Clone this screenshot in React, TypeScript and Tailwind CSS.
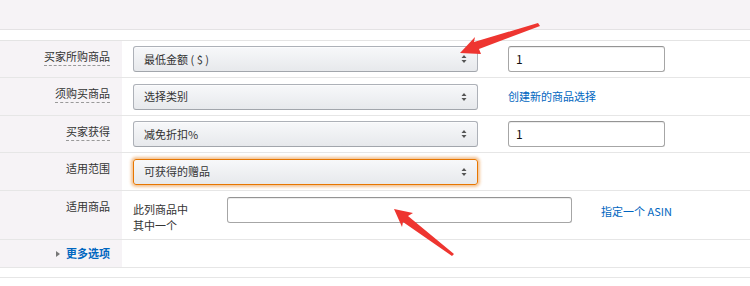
import React from "react"

const font = { fontFamily: '"Noto Sans CJK SC", "Liberation Sans", sans-serif' }

function Arrows() {
  return (
    <svg width="12" height="12" viewBox="0 0 6 10" className="w-[6px] h-[10px]">
      <path d="M3 1 L5.5 4 H0.5 Z M3 9 L5.5 6 H0.5 Z" fill="#555" />
    </svg>
  )
}

function Select({ text, focus = false }: { text: string; focus?: boolean }) {
  return (
    <div
      className={
        focus
          ? "w-[345px] h-[26px] flex items-center justify-between pl-[10px] pr-[10px] rounded-[3px] border border-[#e77600] bg-linear-to-b from-[#f7f8fa] to-[#e7e9ec] shadow-[0_0_3px_2px_rgba(228,121,17,0.45)] text-[#333]"
          : "w-[345px] h-[26px] flex items-center justify-between pl-[10px] pr-[10px] rounded-[3px] border border-[#adb1b8] border-b-[#a2a6ac] bg-linear-to-b from-[#f7f8fa] to-[#e7e9ec] shadow-[0_1px_0_rgba(255,255,255,0.6)_inset] text-[#333]"
      }
    >
      <span>{text}</span>
      <Arrows />
    </div>
  )
}

function TextInput({ value, w }: { value?: string; w: string }) {
  return (
    <div className={`${w} h-[26px] flex items-center px-[7px] rounded-[3px] border border-[#a6a6a6] border-t-[#949494] bg-white shadow-[0_1px_0_rgba(255,255,255,0.5),0_1px_0_rgba(0,0,0,0.07)_inset] text-[#111] text-[12px]`}>
      {value}
    </div>
  )
}

function Label({ text, dotted = false }: { text: string; dotted?: boolean }) {
  return (
    <div className="w-[122px] shrink-0 bg-[#f6f3f6] text-right pr-[12px] pt-[7px] leading-[16px] text-[#333]">
      <span className={dotted ? "border-b border-dashed border-[#999] pb-[1px]" : ""}>{text}</span>
    </div>
  )
}

export default function App() {
  return (
    <div className="relative w-[750px] h-[286px] bg-white text-[11px] overflow-hidden" style={font}>
      <div className="h-[30px] bg-[#f6f3f6] border-b border-[#e4e2e4]" />
      <div className="h-[10px]" />
      <div className="border-t border-[#e4e4e4]">
        <div className="flex h-[37px] border-b border-[#e6e6e6]">
          <Label text="买家所购商品" dotted />
          <div className="flex-1 flex items-center pl-[11px] gap-[30px]">
            <Select text="最低金额 ( $ )" />
            <TextInput value="1" w="w-[157px]" />
          </div>
        </div>
        <div className="flex h-[38px] border-b border-[#e6e6e6]">
          <Label text="须购买商品" dotted />
          <div className="flex-1 flex items-center pl-[11px] gap-[30px]">
            <Select text="选择类别" />
            <span className="text-[#0066c0]">创建新的商品选择</span>
          </div>
        </div>
        <div className="flex h-[37px] border-b border-[#e6e6e6]">
          <Label text="买家获得" dotted />
          <div className="flex-1 flex items-center pl-[11px] gap-[30px]">
            <Select text="减免折扣%" />
            <TextInput value="1" w="w-[157px]" />
          </div>
        </div>
        <div className="flex h-[38px] border-b border-[#e6e6e6]">
          <Label text="适用范围" />
          <div className="flex-1 flex items-center pl-[11px]">
            <Select text="可获得的赠品" focus />
          </div>
        </div>
        <div className="flex h-[49px] border-b border-[#e6e6e6]">
          <Label text="适用商品" />
          <div className="flex-1 flex items-start pl-[11px]">
            <div className="w-[94px] pt-[10px] leading-[16px] text-[#333]">
              此列商品中
              <br />
              其中一个
            </div>
            <div className="pt-[6px]">
              <TextInput w="w-[345px]" />
            </div>
            <span className="ml-[29px] pt-[12px] text-[#0066c0]">指定一个 ASIN</span>
          </div>
        </div>
        <div className="flex h-[28px] border-b border-[#e6e6e6]">
          <div className="w-[122px] shrink-0 bg-[#f6f3f6] flex items-center justify-end pr-[12px] gap-[6px]">
            <svg width="4" height="6" viewBox="0 0 4 6">
              <path d="M0 0 L4 3 L0 6 Z" fill="#777" />
            </svg>
            <span className="text-[#0066c0] font-bold text-[11px]">更多选项</span>
          </div>
          <div className="flex-1" />
        </div>
        <div className="h-[10px] border-b border-[#e6e6e6]" />
      </div>

      {/* red annotation arrows */}
      <svg className="absolute inset-0 pointer-events-none" width="750" height="286" viewBox="0 0 750 286">
        <polygon
          points="460,53 475,37 474,42 538,23 540,26 479,49 481,54"
          fill="#ee3530"
        />
        <polygon
          points="394,209 413,213 408,216 454,254 452,256 403,222 402,227"
          fill="#ee3530"
        />
      </svg>
    </div>
  )
}
